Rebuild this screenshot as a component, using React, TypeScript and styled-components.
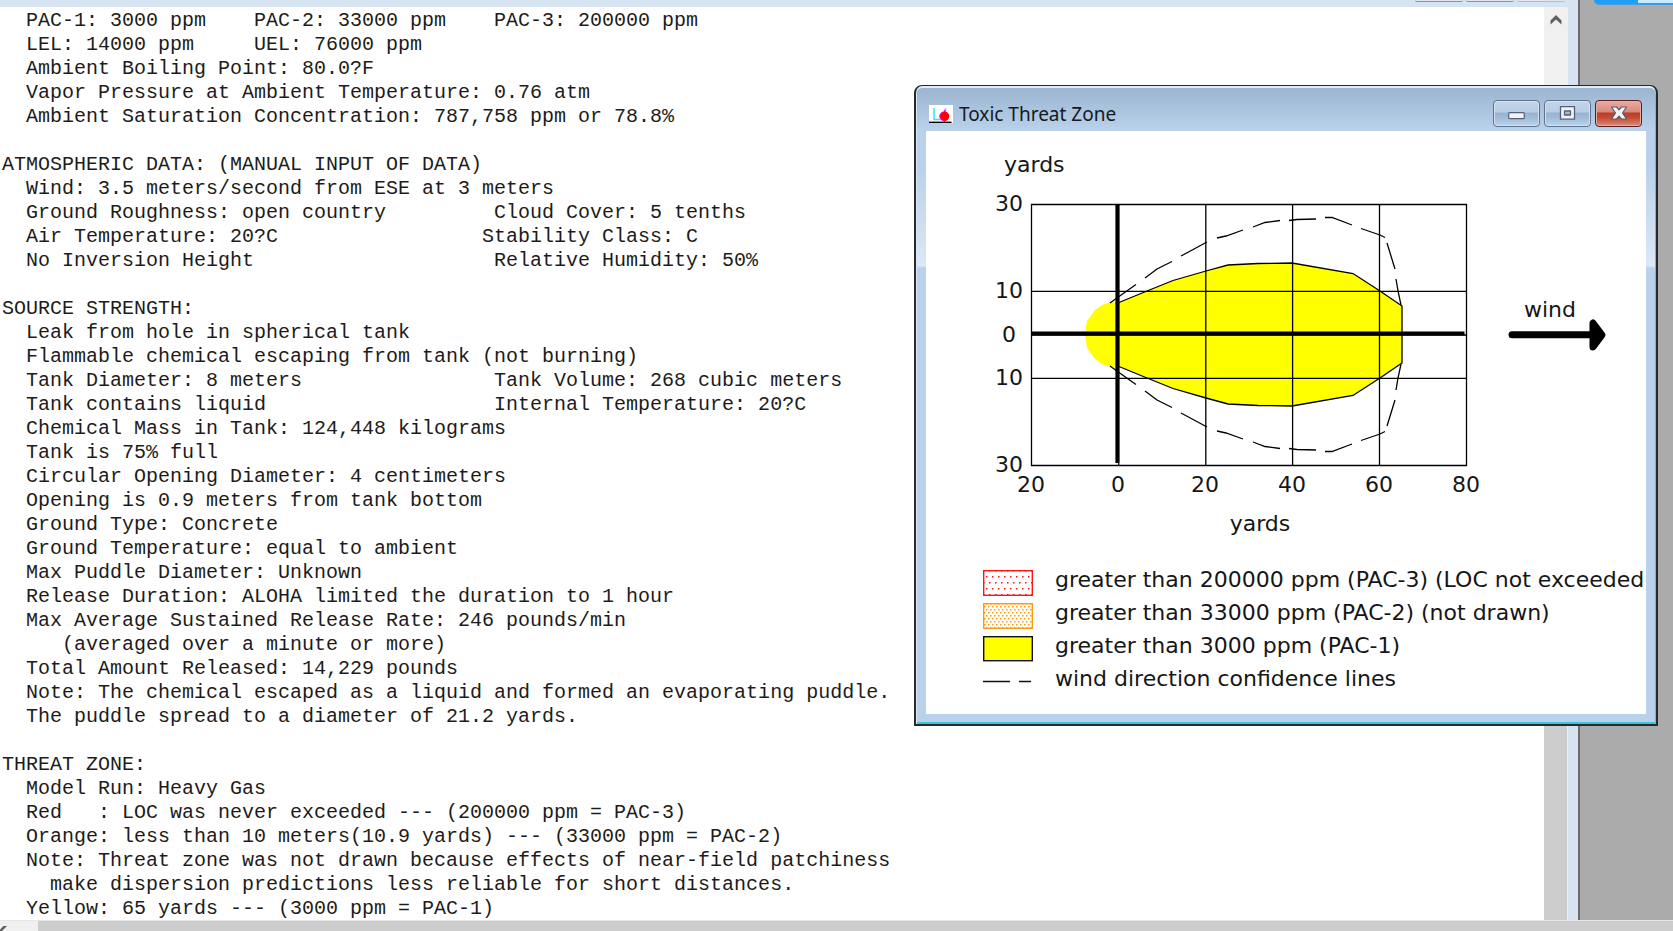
import React from "react";
import styled, { createGlobalStyle } from "styled-components";

const GlobalStyle = createGlobalStyle`
  * { box-sizing: border-box; }
  body { margin: 0; background: #ababab; }
  button { padding: 0; margin: 0; font: inherit; }
`;

const Desktop = styled.div`
  position: relative;
  display: flex;
  flex-direction: column;
  height: 100vh;
  overflow: hidden;
  background: #ababab;
`;

const Workspace = styled.div`
  flex: 1;
  min-height: 0;
  display: flex;
`;

const SummaryWindow = styled.section`
  flex: 1;
  min-width: 0;
  display: flex;
  flex-direction: column;
  background: #d6e4f2;
  border-right: 2px solid #6a6a6a;
`;

const SummaryCaption = styled.header`
  flex: none;
  height: 7px;
  display: flex;
  justify-content: flex-end;
  align-items: flex-start;
  gap: 3px;
  padding-right: 13px;
`;

const CaptionEdge = styled.button<{ $faded?: boolean }>`
  width: 48px;
  height: 2px;
  background: #dfe8f2;
  border: 0;
  border-bottom: 1px solid ${(p) => (p.$faded ? "#b3bcc8" : "#8594ab")};
  border-radius: 0 0 4px 4px;
`;

const SummaryBody = styled.div`
  flex: 1;
  min-height: 0;
  display: flex;
  margin-right: 10px;
  background: #fff;
`;

const Report = styled.pre`
  flex: 1;
  min-width: 0;
  margin: 0;
  padding: 2px 0 0 2px;
  overflow: hidden;
  color: #1c1c1c;
  font: 20px/24px "Courier New", "Liberation Mono", monospace;
`;

const VerticalScroll = styled.div`
  flex: none;
  width: 24px;
  display: flex;
  flex-direction: column;
  background: #f0f0f0;
`;

const ScrollArrow = styled.button`
  flex: none;
  display: flex;
  align-items: center;
  justify-content: center;
  width: 23px;
  height: 26px;
  background: #f0f0f0;
  border: 0;
`;

const ScrollTrack = styled.div`
  flex: 1;
  padding-top: 320px;
`;

const ScrollThumb = styled.div`
  height: 100%;
  margin-right: 1px;
  background: #cdcdcd;
`;

const SideArea = styled.aside`
  flex: none;
  width: 93px;
  padding-left: 14px;
`;

const SideTab = styled.div`
  height: 5px;
  padding-left: 44px;
  background: #1e9fff;
  border-bottom: 1px solid #4b9fdc;
  border-radius: 0 0 0 5px;
`;

const SideTabFace = styled.div`
  height: 3px;
  background: #c6ecff;
`;

const BottomScroll = styled.footer`
  flex: none;
  height: 11px;
  display: flex;
  background: #cdcdcd;
  border-top: 1px solid #e6e6e6;
`;

const BottomArrow = styled.button`
  width: 38px;
  height: 10px;
  display: flex;
  align-items: flex-end;
  background: #f0f0f0;
  border: 0;
`;

const ZoneWindow = styled.section`
  position: absolute;
  top: 85px;
  right: 15px;
  width: 744px;
  display: flex;
  flex-direction: column;
  padding: 0 10px 10px 10px;
  border: 2px solid #262a2e;
  border-top-width: 1px;
  border-radius: 8px 8px 0 0;
  background:
    linear-gradient(#9ab4d0 0, #b9d1ea 44px, #b9d1ea 80px, #dce8f5 180px, #b9d1ea 182px);
  box-shadow: inset 0 2px 0 #e4edf6, inset 1px 0 0 #dbe7f3,
    inset -1px 0 0 #41d0e6, inset 0 -2px 0 #3cc4d8;
`;

const ZoneCaption = styled.header`
  height: 45px;
  display: flex;
  align-items: center;
  gap: 6px;
  padding: 10px 4px 0 3px;
`;

const ZoneTitle = styled.h1`
  flex: 1;
  margin: 0;
  color: #141a22;
  font: 400 19px/24px "Segoe UI", "Noto Sans", sans-serif;
`;

const WindowButtons = styled.div`
  display: flex;
  gap: 4px;
`;

const WindowButton = styled.button<{ $danger?: boolean }>`
  width: 47px;
  height: 27px;
  display: flex;
  align-items: center;
  justify-content: center;
  border: 1px solid ${(p) => (p.$danger ? "#5a1d26" : "#60728f")};
  border-radius: 4px;
  background: ${(p) =>
    p.$danger
      ? "linear-gradient(#e9aca1 0, #d98879 45%, #b93d24 47%, #c04a31 65%, #dc8c76 100%)"
      : "linear-gradient(#c3d5e8 0, #b8cde4 45%, #98b2ce 47%, #a3bdd9 70%, #bdd4eb 100%)"};
  box-shadow: inset 0 0 0 1px ${(p) => (p.$danger ? "#e5aca2" : "#d4e2f0")};
`;

const ZoneContent = styled.div`
  height: 583px;
  overflow: hidden;
  background: #fff;
  color: #161616;
  font: 22px/33px Verdana, "DejaVu Sans", sans-serif;
`;

const Plot = styled.svg`
  display: block;
  width: 100%;
  height: 432px;
  font: 22px Verdana, "DejaVu Sans", sans-serif;
  fill: #161616;
`;

const Legend = styled.ul`
  margin: 0;
  padding: 0 0 0 57px;
  list-style: none;
`;

const LegendRow = styled.li`
  height: 33px;
  display: flex;
  gap: 22px;
  white-space: nowrap;
`;

const Swatch = styled.svg`
  flex: none;
  width: 50px;
  height: 26px;
  margin-top: 7px;
`;

const REPORT = `  PAC-1: 3000 ppm    PAC-2: 33000 ppm    PAC-3: 200000 ppm
  LEL: 14000 ppm     UEL: 76000 ppm
  Ambient Boiling Point: 80.0?F
  Vapor Pressure at Ambient Temperature: 0.76 atm
  Ambient Saturation Concentration: 787,758 ppm or 78.8%

ATMOSPHERIC DATA: (MANUAL INPUT OF DATA)
  Wind: 3.5 meters/second from ESE at 3 meters
  Ground Roughness: open country         Cloud Cover: 5 tenths
  Air Temperature: 20?C                 Stability Class: C
  No Inversion Height                    Relative Humidity: 50%

SOURCE STRENGTH:
  Leak from hole in spherical tank
  Flammable chemical escaping from tank (not burning)
  Tank Diameter: 8 meters                Tank Volume: 268 cubic meters
  Tank contains liquid                   Internal Temperature: 20?C
  Chemical Mass in Tank: 124,448 kilograms
  Tank is 75% full
  Circular Opening Diameter: 4 centimeters
  Opening is 0.9 meters from tank bottom
  Ground Type: Concrete
  Ground Temperature: equal to ambient
  Max Puddle Diameter: Unknown
  Release Duration: ALOHA limited the duration to 1 hour
  Max Average Sustained Release Rate: 246 pounds/min
     (averaged over a minute or more)
  Total Amount Released: 14,229 pounds
  Note: The chemical escaped as a liquid and formed an evaporating puddle.
  The puddle spread to a diameter of 21.2 yards.

THREAT ZONE:
  Model Run: Heavy Gas
  Red   : LOC was never exceeded --- (200000 ppm = PAC-3)
  Orange: less than 10 meters(10.9 yards) --- (33000 ppm = PAC-2)
  Note: Threat zone was not drawn because effects of near-field patchiness
    make dispersion predictions less reliable for short distances.
  Yellow: 65 yards --- (3000 ppm = PAC-1)`;

type Point = [number, number];

// Upper half of the plume; the lower half is its reflection in the wind axis.
const AXIS_Y = 203.5;
const PLUME_EDGE: Point[] = [
  [193, 171.5], [221, 160], [247, 149.5], [280, 140], [302, 134], [332, 132.5],
  [366, 132], [427, 142.5], [454, 160], [476, 175],
];
const PUDDLE_EDGE: Point[] = [
  [159, 203.5], [161, 190], [169, 179], [176, 174], [184, 171],
];
const CONFIDENCE_DASHES: Point[][] = [
  [[184, 172], [193, 165.5], [210, 153.5]],
  [[219, 147], [231, 138], [246, 130.5]],
  [[255, 125], [281, 111]],
  [[291, 107], [300, 105], [317, 99]],
  [[327, 96], [339, 91.5], [354, 89.5]],
  [[363, 89.5], [371, 88.5], [390, 88]],
  [[399, 86.5], [406, 86.5], [426, 94]],
  [[435, 97.5], [454, 104], [459, 106.5]],
  [[461, 112], [469, 138]],
  [[470, 148], [472, 160], [475, 174]],
];

const mirror = (pts: Point[]): Point[] => pts.map(([x, y]) => [x, 2 * AXIS_Y - y]);
const line = (pts: Point[]) => "M" + pts.map((p) => p.join(",")).join("L");

const plumeArea =
  line([
    ...PUDDLE_EDGE,
    ...PLUME_EDGE,
    ...mirror(PLUME_EDGE).reverse(),
    ...mirror(PUDDLE_EDGE).reverse(),
  ]) + "Z";
const plumeOutline = line([...PLUME_EDGE, ...mirror(PLUME_EDGE).reverse()]);
const confidence = [...CONFIDENCE_DASHES, ...CONFIDENCE_DASHES.map(mirror)]
  .map(line)
  .join("");

const Y_TICKS: [string, number][] = [["30", 80], ["10", 167], ["0", 211], ["10", 254], ["30", 341]];
const X_TICKS: [string, number][] = [
  ["20", 105], ["0", 192], ["20", 279], ["40", 366], ["60", 453], ["80", 540],
];

function ThreatPlot() {
  return (
    <Plot role="img" aria-label="Toxic threat zone footprint in yards">
      <path d={plumeArea} fill="#ffff00" />
      <g fill="none" stroke="#000" strokeWidth="1.3">
        <path d="M105.5 73.5H540.5V334.5H105.5ZM279.8 73.5V334.5M366.6 73.5V334.5M453.5 73.5V334.5M105.5 160.4H540.5M105.5 247.4H540.5M192.7 73.5V334.5M105.5 204H540.5" />
        <path d={plumeOutline} />
        <path d={confidence} />
        <path d="M191.4 73V332M105 202.4H538.5" strokeWidth="4" />
      </g>
      <text x="78" y="41">yards</text>
      {Y_TICKS.map(([label, y], i) => (
        <text key={i} x="83" y={y} textAnchor="middle">{label}</text>
      ))}
      {X_TICKS.map(([label, x]) => (
        <text key={x} x={x} y="361" textAnchor="middle">{label}</text>
      ))}
      <text x="334" y="400" textAnchor="middle">yards</text>
      <text x="624" y="186" textAnchor="middle">wind</text>
      <path d="M586 203.7H664" stroke="#000" strokeWidth="7" strokeLinecap="round" />
      <path d="M667 192V216L676 204Z" fill="#000" stroke="#000" strokeWidth="7" strokeLinejoin="round" />
    </Plot>
  );
}

function DotSwatch({ id, color, w, h }: { id: string; color: string; w: number; h: number }) {
  return (
    <Swatch aria-hidden="true">
      <defs>
        <pattern id={id} x="3" y="6" width={w} height={h} patternUnits="userSpaceOnUse">
          <rect width="1.5" height="1.5" fill={color} />
          <rect x={w / 2} y={h / 2} width="1.5" height="1.5" fill={color} />
        </pattern>
      </defs>
      <rect x="0.7" y="0.7" width="48.6" height="24.6" fill={`url(#${id})`} stroke={color} strokeWidth="1.4" />
    </Swatch>
  );
}

export default function App() {
  return (
    <>
      <GlobalStyle />
      <Desktop>
        <Workspace>
          <SummaryWindow aria-label="Text Summary">
            <SummaryCaption>
              <CaptionEdge aria-label="Minimize summary" />
              <CaptionEdge aria-label="Maximize summary" />
              <CaptionEdge aria-label="Close summary" $faded />
            </SummaryCaption>
            <SummaryBody>
              <Report>{REPORT}</Report>
              <VerticalScroll>
                <ScrollArrow aria-label="Scroll up">
                  <svg width="12" height="10" viewBox="0 0 12 10">
                    <path d="M0.5 5.5L6 0L11.500 5.5V9.500L6 4.500L0.500 9.500Z" fill="#606060" />
                  </svg>
                </ScrollArrow>
                <ScrollTrack>
                  <ScrollThumb />
                </ScrollTrack>
              </VerticalScroll>
            </SummaryBody>
          </SummaryWindow>
          <SideArea>
            <SideTab>
              <SideTabFace />
            </SideTab>
          </SideArea>
        </Workspace>
        <BottomScroll>
          <BottomArrow aria-label="Scroll left">
            <svg width="8" height="5" viewBox="0 0 8 5">
              <path d="M3.500 0H7L2 5H-1V4.500Z" fill="#606060" />
            </svg>
          </BottomArrow>
        </BottomScroll>

        <ZoneWindow aria-labelledby="zone-title">
          <ZoneCaption>
            <svg width="24" height="18" viewBox="0 0 24 18" aria-hidden="true">
              <path d="M0 0H24V18H0Z" fill="#fff" />
              <path d="M5 3V14.500H11M16.500 3V8" fill="none" stroke="#2fe6f2" strokeWidth="1.500" />
              <path d="M15.500 5V17" stroke="#f0f" strokeWidth="1.500" />
              <circle cx="15" cy="11.300" r="4.800" fill="#f0f" />
              <circle cx="15.800" cy="11.300" r="4.500" fill="#ff0000" />
              <path d="M0 17.300H22.500" stroke="#000" strokeWidth="1.400" />
            </svg>
            <ZoneTitle id="zone-title">Toxic Threat Zone</ZoneTitle>
            <WindowButtons>
              <WindowButton aria-label="Minimize">
                <svg width="17" height="17" viewBox="0 0 17 17">
                  <rect x="0.700" y="7.700" width="15.600" height="6" rx="1" fill="#f2f2f2" stroke="#53607a" strokeWidth="1.200" />
                </svg>
              </WindowButton>
              <WindowButton aria-label="Maximize">
                <svg width="17" height="15" viewBox="0 0 17 15">
                  <path d="M1.500 0.700H15.500V13.200H1.500ZM5.500 5V9H11.500V5Z" fill="#f2f2f2" fillRule="evenodd" stroke="#53607a" strokeWidth="1.300" strokeLinejoin="round" />
                </svg>
              </WindowButton>
              <WindowButton aria-label="Close" $danger>
                <svg width="18" height="15" viewBox="0 0 18 15">
                  <path d="M1.500 1H6.500L9 3.800L11.500 1H16.500L12.500 7L16.500 13H11.500L9 10.200L6.500 13H1.500L5.500 7Z" fill="#f4f4f4" stroke="#565e74" strokeWidth="1.200" strokeLinejoin="round" />
                </svg>
              </WindowButton>
            </WindowButtons>
          </ZoneCaption>
          <ZoneContent>
            <ThreatPlot />
            <Legend>
              <LegendRow>
                <DotSwatch id="dots-red" color="#ff1414" w={6} h={12} />
                greater than 200000 ppm (PAC-3) (LOC not exceeded)
              </LegendRow>
              <LegendRow>
                <DotSwatch id="dots-orange" color="#ff9a0a" w={4} h={6} />
                greater than 33000 ppm (PAC-2) (not drawn)
              </LegendRow>
              <LegendRow>
                <Swatch aria-hidden="true">
                  <rect x="0.700" y="0.700" width="48.600" height="24" fill="#ffff00" stroke="#111" strokeWidth="1.400" />
                </Swatch>
                greater than 3000 ppm (PAC-1)
              </LegendRow>
              <LegendRow>
                <Swatch aria-hidden="true">
                  <path d="M0 12.500H27M36 12.500H48" stroke="#111" strokeWidth="1.400" />
                </Swatch>
                wind direction confidence lines
              </LegendRow>
            </Legend>
          </ZoneContent>
        </ZoneWindow>
      </Desktop>
    </>
  );
}
